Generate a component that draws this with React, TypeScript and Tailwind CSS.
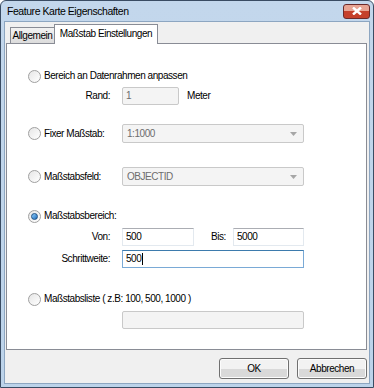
import type { ReactNode } from "react";

function Radio({ checked = false }: { checked?: boolean }) {
  return (
    <span className="flex h-[13px] w-[13px] shrink-0 items-center justify-center rounded-full border border-[#a0a0a0] bg-gradient-to-br from-[#e6e6e6] to-[#ffffff]">
      {checked && (
        <span className="h-[7px] w-[7px] rounded-full border border-[#1c4f84] bg-gradient-to-br from-[#8fd0ff] to-[#1a6bb8]" />
      )}
    </span>
  );
}

function RadioRow({ checked, label, mt }: { checked?: boolean; label: string; mt: string }) {
  return (
    <div className={`flex h-[14px] items-center gap-[3px] ${mt}`}>
      <Radio checked={checked} />
      <span className="text-black">{label}</span>
    </div>
  );
}

function Field({
  value,
  width,
  disabled = false,
  focused = false,
  caret = false,
}: {
  value: string;
  width: string;
  disabled?: boolean;
  focused?: boolean;
  caret?: boolean;
}) {
  const look = disabled
    ? "border-[#c9c9c9] bg-[#f4f4f4] text-[#6d6d6d] rounded-[2px]"
    : focused
      ? "border-[#7aaad6] border-t-[#3d7bad] bg-white text-black"
      : "border-[#e3e9ef] border-t-[#abadb3] bg-white text-black";
  return (
    <div className={`flex h-[18px] items-center border px-[3px] ${width} ${look}`}>
      <span>{value}</span>
      {caret && <span className="ml-px h-[12px] w-px bg-black" />}
    </div>
  );
}

function Combo({ value }: { value: string }) {
  return (
    <div className="flex h-[19px] w-[182px] items-center justify-between rounded-[2px] border border-[#c9c9c9] bg-[#f4f4f4] pl-[4px] pr-[6px] text-[#6d6d6d]">
      <span>{value}</span>
      <svg width="7" height="4" viewBox="0 0 7 4">
        <path d="M0 0h7L3.5 4z" fill="#a6a6a6" />
      </svg>
    </div>
  );
}

function Labeled({ label, children, mt }: { label: string; children: ReactNode; mt: string }) {
  return (
    <div className={`flex items-center ${mt}`}>
      <span className="w-[82px] text-right">{label}</span>
      <div className="ml-[12px] flex items-center">{children}</div>
    </div>
  );
}

function Button({ children }: { children: ReactNode }) {
  return (
    <button className="flex h-[21px] w-[70px] items-center justify-center rounded-[3px] border border-[#707070] bg-gradient-to-b from-[#f2f2f2] from-50% to-[#d9d9d9] to-50% text-black shadow-[inset_0_0_0_1px_#fcfcfc]">
      {children}
    </button>
  );
}

export default function App() {
  return (
    <div className="h-[388px] w-[374px] bg-white font-['Liberation_Sans',Arial,sans-serif] text-[10px] leading-none tracking-[-0.45px] text-black">
      <div className="flex h-full w-full flex-col rounded-t-[6px] border border-[#3a4c63] bg-gradient-to-b from-[#c3d7ec] to-[#bcd3ea]">
        {/* title bar */}
        <div className="flex h-[20px] items-center justify-between pl-[6px] pr-[3px]">
          <span className="text-[10.5px] text-black">Feature Karte Eigenschaften</span>
          <div className="flex h-[15px] w-[27px] items-center justify-center rounded-[3px] border border-[#6b2a2a] bg-gradient-to-b from-[#e8a493] from-45% to-[#c5402b] to-45%">
            <svg width="10" height="8" viewBox="0 0 10 8">
              <path d="M1 0.5l8 7M9 0.5l-8 7" stroke="#ffffff" strokeWidth="2.4" />
            </svg>
          </div>
        </div>

        {/* client */}
        <div className="mx-[3px] mb-[3px] flex flex-1 flex-col border border-[#8da6c1] bg-[#f0f0f0]">
          {/* tabs */}
          <div className="flex h-[21px] items-end pl-[5px]">
            <div className="flex h-[16px] w-[45px] items-center justify-center border border-b-0 border-[#898c95] bg-gradient-to-b from-[#f2f2f2] to-[#dcdcdc]">
              Allgemein
            </div>
            <div className="relative top-px -ml-px flex h-[20px] w-[104px] items-start justify-center border border-b-0 border-[#898c95] bg-white pt-[4px]">
              Maßstab Einstellungen
            </div>
          </div>

          {/* panel */}
          <div className="ml-px mr-[2px] flex h-[307px] flex-col border border-[#898c95] bg-white pl-[21px]">
            <RadioRow label="Bereich an Datenrahmen anpassen" mt="mt-[25px]" />
            <Labeled label="Rand:" mt="mt-[4px]">
              <Field value="1" width="w-[57px]" disabled />
              <span className="ml-[8px]">Meter</span>
            </Labeled>

            <div className="mt-[19px] flex items-center">
              <div className="flex w-[94px] items-center gap-[3px]">
                <Radio />
                <span>Fixer Maßstab:</span>
              </div>
              <Combo value="1:1000" />
            </div>

            <div className="mt-[24px] flex items-center">
              <div className="flex w-[94px] items-center gap-[3px]">
                <Radio />
                <span>Maßstabsfeld:</span>
              </div>
              <Combo value="OBJECTID" />
            </div>

            <RadioRow checked label="Maßstabsbereich:" mt="mt-[23px]" />
            <Labeled label="Von:" mt="mt-[5px]">
              <Field value="500" width="w-[72px]" />
              <span className="ml-[17px] w-[22px]">Bis:</span>
              <Field value="5000" width="w-[71px]" />
            </Labeled>
            <Labeled label="Schrittweite:" mt="mt-[4px]">
              <Field value="500" width="w-[182px]" focused caret />
            </Labeled>

            <RadioRow label="Maßstabsliste ( z.B: 100, 500, 1000 )" mt="mt-[24px]" />
            <Labeled label="" mt="mt-[5px]">
              <Field value="" width="w-[182px]" disabled />
            </Labeled>
          </div>

          {/* footer */}
          <div className="flex flex-1 items-start justify-end gap-[8px] pr-[2px] pt-[8px]">
            <Button>OK</Button>
            <Button>Abbrechen</Button>
          </div>
        </div>
      </div>
    </div>
  );
}
